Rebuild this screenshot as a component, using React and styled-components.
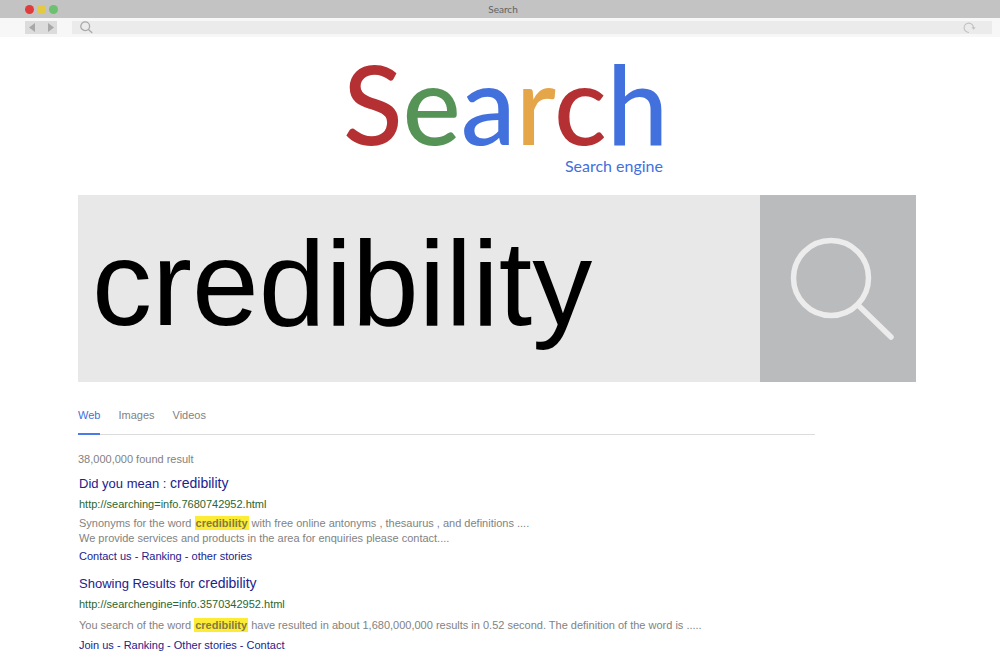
import React, { useState } from "react";
import styled, { createGlobalStyle } from "styled-components";

const GlobalStyle = createGlobalStyle`
  * { box-sizing: border-box; }
  body {
    margin: 0;
    background: #fff;
    font-family: "Liberation Sans", Arial, sans-serif;
    font-size: 11px;
    color: #828282;
  }
  button, input { font: inherit; border: 0; padding: 0; margin: 0; border-radius: 0; }
  button { cursor: pointer; }
  svg { display: block; }
`;

const TitleBar = styled.header`
  display: grid;
  grid-template-columns: 1fr auto 1fr;
  align-items: center;
  height: 18px;
  padding: 0 19px 0 25px;
  background: #c3c3c3;
`;

const WindowTitle = styled.span`
  font-family: Lato, sans-serif;
  font-size: 10px;
  line-height: 18px;
  color: #626262;
`;

const Lights = styled.div`
  display: flex;
  gap: 3px;
`;

const Light = styled.button`
  width: 9px;
  height: 9px;
  border-radius: 50%;
  background: ${(p) => p.$color};
`;

const Toolbar = styled.div`
  display: flex;
  gap: 15px;
  height: 19px;
  padding: 3px 8px 3px 25px;
  background: #f7f7f7;
`;

const HistoryButtons = styled.div`
  display: flex;
  justify-content: space-between;
  width: 32px;
  padding: 0 3px 0 4px;
  background: #dcdcdc;
`;

const HistoryButton = styled.button`
  display: grid;
  place-items: center;
  background: none;
`;

const AddressBar = styled.label`
  flex: 1;
  display: flex;
  align-items: center;
  gap: 8px;
  padding: 0 16px 0 8px;
  background: #ebebeb;
`;

const AddressInput = styled.input`
  flex: 1;
  min-width: 0;
  height: 13px;
  background: none;
  outline: 0;
`;

const ReloadButton = styled.button`
  background: none;
`;

const Page = styled.main`
  padding: 16px 84px 0 78px;
`;

const Brand = styled.div`
  width: 332px;
  margin: 0 auto;
  padding-left: 12px;
`;

const Logo = styled.h1`
  margin: 0;
  font-family: Lato, sans-serif;
  font-size: 110px;
  line-height: 98px;
  font-weight: 500;
  white-space: nowrap;
`;

const LogoLetter = styled.span`
  color: ${(p) => p.$color};
`;

const Tagline = styled.p`
  margin: 5px 0 0;
  text-align: right;
  font-family: Lato, sans-serif;
  font-size: 16px;
  line-height: 20px;
  color: #4270dc;
`;

const SearchForm = styled.form`
  display: flex;
  height: 187px;
  margin-top: 19px;
`;

const SearchInput = styled.input`
  flex: 1;
  min-width: 0;
  padding: 0 14px 12px;
  background: #e8e8e8;
  color: #000;
  font-size: 120px;
  outline: 0;
`;

const SearchButton = styled.button`
  flex: 0 0 156px;
  background: #babbbd;
`;

const Tabs = styled.nav`
  display: flex;
  gap: 18px;
  max-width: 737px;
  margin-top: 23px;
  border-bottom: 1px solid #dcdcdc;
`;

const Tab = styled.a`
  height: 30px;
  margin-bottom: -1px;
  line-height: 20px;
  text-decoration: none;
  color: ${(p) => (p.$active ? "#4270dc" : "#828282")};
  border-bottom: 2px solid ${(p) => (p.$active ? "#4a7be6" : "transparent")};
`;

const Count = styled.p`
  margin: 14px 0 5px;
  line-height: 20px;
`;

const Results = styled.div`
  display: flex;
  flex-direction: column;
  gap: 8px;
  padding-left: 1px;
`;

const ResultTitle = styled.h2`
  height: 20px;
  margin: 0;
  font-size: 13px;
  line-height: 20px;
  font-weight: 400;
`;

const Term = styled.span`
  font-size: 14px;
  line-height: 16px;
`;

const NavyLink = styled.a`
  color: #22228c;
  text-decoration: none;
`;

const UrlLink = styled.a`
  display: block;
  line-height: 20px;
  color: #2b6630;
  text-decoration: none;
`;

const Snippet = styled.p`
  margin: 0;
  padding: ${(p) => (p.$roomy ? "4px 0 2px" : "2px 0 0")};
  line-height: 15px;
`;

const Mark = styled.mark`
  padding: 1px;
  background: #fdec36;
  color: #807a45;
  font-weight: 700;
`;

const LinkRow = styled.p`
  margin: 0;
  line-height: 20px;
  color: #22228c;
`;

const letters = [
  ["S", "#b53032"],
  ["e", "#559357"],
  ["a", "#4270dc"],
  ["r", "#e5a549"],
  ["c", "#b53032"],
  ["h", "#4270dc"],
];

const results = [
  {
    title: "Did you mean : ",
    url: "http://searching=info.7680742952.html",
    before: "Synonyms for the word ",
    after: " with free online antonyms , thesaurus , and definitions ....",
    second: "We provide services and products in the area for enquiries please contact....",
    links: ["Contact us", "Ranking", "other stories"],
  },
  {
    title: "Showing Results for ",
    url: "http://searchengine=info.3570342952.html",
    before: "You search of the word ",
    after: " have resulted in about 1,680,000,000 results in 0.52 second. The definition of the word is .....",
    links: ["Join us", "Ranking", "Other stories", "Contact"],
  },
];

function Result({ item }) {
  return (
    <article>
      <ResultTitle>
        <NavyLink href="#result">{item.title}<Term>credibility</Term></NavyLink>
      </ResultTitle>
      <UrlLink href="#result">{item.url}</UrlLink>
      <Snippet $roomy={!item.second}>
        {item.before}<Mark>credibility</Mark>{item.after}
        {item.second && <><br />{item.second}</>}
      </Snippet>
      <LinkRow>
        {item.links.map((text, i) => (
          <React.Fragment key={text}>
            {i > 0 && " - "}
            <NavyLink href="#more">{text}</NavyLink>
          </React.Fragment>
        ))}
      </LinkRow>
    </article>
  );
}

export default function App() {
  const [query, setQuery] = useState("credibility");
  return (
    <>
      <GlobalStyle />
      <TitleBar>
        <Lights>
          <Light $color="#e03c3c" aria-label="Close" />
          <Light $color="#e3ca40" aria-label="Minimize" />
          <Light $color="#6cc070" aria-label="Zoom" />
        </Lights>
        <WindowTitle>Search</WindowTitle>
      </TitleBar>
      <Toolbar>
        <HistoryButtons>
          <HistoryButton aria-label="Back">
            <svg width="6" height="9" viewBox="0 0 6 9"><path d="M6 0v9L0 4.5z" fill="#a8a8a8" /></svg>
          </HistoryButton>
          <HistoryButton aria-label="Forward">
            <svg width="6" height="9" viewBox="0 0 6 9"><path d="M0 0v9l6-4.5z" fill="#a8a8a8" /></svg>
          </HistoryButton>
        </HistoryButtons>
        <AddressBar>
          <svg width="13" height="13" viewBox="0 0 13 13" fill="none" stroke="#a8a8a8" strokeWidth="1.3" strokeLinecap="round">
            <circle cx="5.2" cy="5.2" r="4.4" />
            <path d="M8.4 8.4 11.8 11.5" />
          </svg>
          <AddressInput aria-label="Address" />
          <ReloadButton type="button" aria-label="Reload">
            <svg width="13" height="12" viewBox="0 0 13 12">
              <path d="M6 10.5A4.7 4.7 0 1 1 10.5 6" fill="none" stroke="#c2c2c2" strokeWidth="1.1" />
              <path d="M8.3 5.2h4.4L10.7 7.7z" fill="#c2c2c2" />
            </svg>
          </ReloadButton>
        </AddressBar>
      </Toolbar>
      <Page>
        <Brand>
          <Logo>{letters.map(([ch, color]) => <LogoLetter key={ch} $color={color}>{ch}</LogoLetter>)}</Logo>
          <Tagline>Search engine</Tagline>
        </Brand>
        <SearchForm onSubmit={(e) => e.preventDefault()}>
          <SearchInput aria-label="Search" value={query} onChange={(e) => setQuery(e.target.value)} />
          <SearchButton aria-label="Run search">
            <svg width="156" height="187" viewBox="0 0 156 187" fill="none" stroke="#ececec" strokeLinecap="round" strokeWidth="5.5">
              <circle cx="71" cy="83" r="37.5" />
              <path d="M99 111 131 142" />
            </svg>
          </SearchButton>
        </SearchForm>
        <Tabs>
          <Tab href="#web" $active>Web</Tab>
          <Tab href="#images">Images</Tab>
          <Tab href="#videos">Videos</Tab>
        </Tabs>
        <Count>38,000,000 found result</Count>
        <Results>{results.map((item) => <Result key={item.url} item={item} />)}</Results>
      </Page>
    </>
  );
}
